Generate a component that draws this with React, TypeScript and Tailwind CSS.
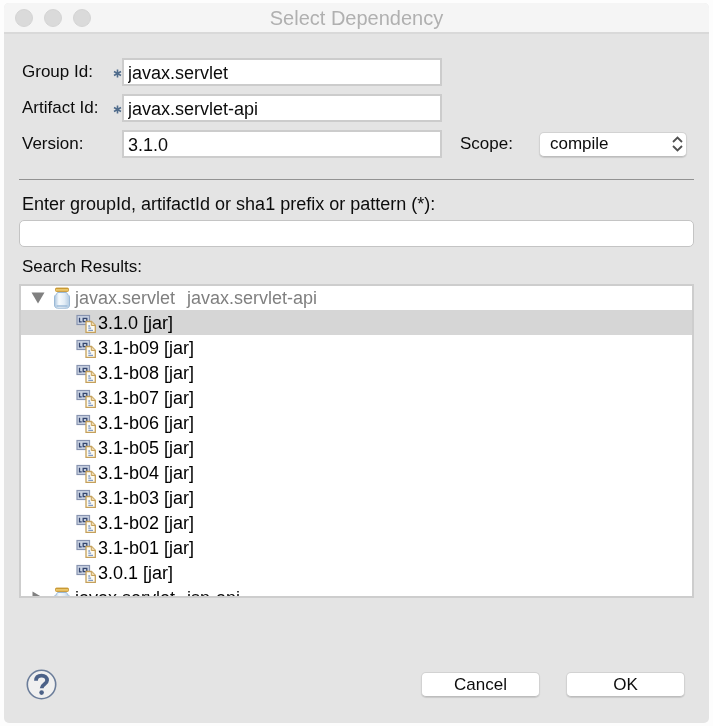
import { useState } from "react";

const versions = [
  "3.1.0",
  "3.1-b09",
  "3.1-b08",
  "3.1-b07",
  "3.1-b06",
  "3.1-b05",
  "3.1-b04",
  "3.1-b03",
  "3.1-b02",
  "3.1-b01",
  "3.0.1",
];

function BottleIcon() {
  return (
    <svg width="18" height="22" viewBox="0 0 18 22" className="shrink-0" aria-hidden="true">
      <defs>
        <linearGradient id="glass" x1="0" x2="1" y1="0" y2="0">
          <stop offset="0" stopColor="#a9c4de" />
          <stop offset="0.3" stopColor="#f6fafd" />
          <stop offset="0.65" stopColor="#e3edf6" />
          <stop offset="1" stopColor="#b3cbe2" />
        </linearGradient>
        <linearGradient id="lid" x1="0" x2="0" y1="0" y2="1">
          <stop offset="0" stopColor="#c08a1c" />
          <stop offset="0.5" stopColor="#f0cf78" />
          <stop offset="1" stopColor="#d9aa45" />
        </linearGradient>
      </defs>
      <path
        d="M4.5 5.5h9c0 1.6 3 2.2 3 4.5v8c0 2-1.2 3.2-3 3.2h-9c-1.8 0-3-1.2-3-3.2v-8c0-2.300 3-2.900 3-4.500z"
        fill="url(#glass)"
        stroke="#9bb9d6"
      />
      <path d="M3.500 19h11" stroke="#9cbbd9" strokeWidth="1.500" />
      <rect x="2.500" y="1" width="13" height="3.500" rx="1" fill="url(#lid)" stroke="#c4922c" strokeWidth="0.800" />
    </svg>
  );
}

function JarIcon() {
  return (
    <svg width="20" height="20" viewBox="0 0 20 20" className="shrink-0" aria-hidden="true">
      <rect x="1" y="2.500" width="12.500" height="9" fill="#cbd4e4" stroke="#8793b0" strokeWidth="1.200" />
      <path d="M3.500 4.800v4h2.200" fill="none" stroke="#34466f" strokeWidth="1.300" />
      <rect x="7.200" y="5.400" width="3.600" height="3.200" fill="none" stroke="#34466f" strokeWidth="1.300" />
      <path d="M10 8.500h5.500l3.800 3.800v7.200H10z" fill="#fdfbf2" stroke="#c5a05a" strokeWidth="1.300" />
      <path d="M15.300 8.500v4h4" fill="#f0dcae" stroke="#c5a05a" />
      <path d="M12.300 13h1.800M12.300 15.200h2.800M12.300 17.300h4.700" stroke="#7f9cc9" strokeWidth="1.300" />
    </svg>
  );
}

function Required() {
  return (
    <svg width="9" height="9" viewBox="0 0 9 9" className="mt-0.5" aria-hidden="true">
      <path d="M4.500 .5v8M1 2.500l7 4M8 2.500l-7 4" stroke="#4f6b8b" strokeWidth="1.600" />
    </svg>
  );
}

const field =
  "h-7 w-full min-w-0 border-2 border-[#cccccc] bg-white px-1 pt-0.5 text-[18px] outline-none";
const button =
  "h-[25px] w-[119px] rounded-[5px] border border-[#d2d2d2] border-b-[#bdbdbd] bg-white leading-[23px] shadow-[0_1px_1px_rgba(0,0,0,0.12)]";

export default function App() {
  const [selected, setSelected] = useState("3.1.0");
  return (
    <div className="bg-[#fdfdfd] px-1 py-[3px] font-['Liberation_Sans',Arial,sans-serif] text-[17px] leading-5 text-[#0c0c0c]">
      <main className="overflow-hidden rounded-[5px] bg-[#e4e4e4]">
        <header className="grid h-[31px] grid-cols-[1fr_auto_1fr] items-center border-b-2 border-[#d9d9d9] bg-[#f5f5f5]">
          <div className="flex gap-[11px] pl-[11px]">
            <span className="size-[18px] rounded-full border border-[#d3d3d3] bg-[#dadada]" />
            <span className="size-[18px] rounded-full border border-[#d3d3d3] bg-[#dadada]" />
            <span className="size-[18px] rounded-full border border-[#d3d3d3] bg-[#dadada]" />
          </div>
          <h1 className="text-[20px] text-[#b0b0b0]">Select Dependency</h1>
        </header>

        <div className="px-[15px] pt-6">
          <form className="grid grid-cols-[100px_1fr_97px_148px] items-center gap-y-2 pr-[7px] pl-[3px]">
            <label htmlFor="group" className="flex items-center justify-between">
              Group Id: <Required />
            </label>
            <input id="group" defaultValue="javax.servlet" className={field} />
            <span className="col-span-2" />
            <label htmlFor="artifact" className="flex items-center justify-between">
              Artifact Id: <Required />
            </label>
            <input id="artifact" defaultValue="javax.servlet-api" className={field} />
            <span className="col-span-2" />
            <label htmlFor="version">Version:</label>
            <input id="version" defaultValue="3.1.0" className={field} />
            <label htmlFor="scope" className="pl-[18px]">
              Scope:
            </label>
            <div className="grid">
              <select
                id="scope"
                className="col-start-1 row-start-1 h-[25px] appearance-none rounded-[5px] border border-[#d2d2d2] border-b-[#bdbdbd] bg-white px-2.5 shadow-[0_1px_1px_rgba(0,0,0,0.12)]"
              >
                <option>compile</option>
                <option>provided</option>
                <option>runtime</option>
                <option>test</option>
              </select>
              <svg
                width="11"
                height="16"
                viewBox="0 0 11 16"
                className="pointer-events-none col-start-1 row-start-1 mr-1 self-center justify-self-end"
                aria-hidden="true"
              >
                <path d="M1 6l4.500-4.500L10 6M1 10l4.500 4.500L10 10" fill="none" stroke="#505050" strokeWidth="1.800" />
              </svg>
            </div>
          </form>

          <hr className="mt-[21px] border-t border-[#929292]" />

          <label htmlFor="query" className="mt-3.5 block px-[3px] text-[18px]">
            Enter groupId, artifactId or sha1 prefix or pattern (*):
          </label>
          <input
            id="query"
            className="mt-1.5 block h-[27px] w-full rounded-[5px] border border-[#c4c4c4] bg-white px-2 outline-none"
          />
          <h2 id="results" className="mt-2.5 px-[3px]">
            Search Results:
          </h2>
          <div
            className="mt-[7px] h-[314px] overflow-y-auto border-2 border-[#cdcdcd] bg-white text-[18px] [scrollbar-width:none]"
            role="tree"
            aria-labelledby="results"
          >
            <div className="flex h-6 items-center pl-2.5 text-[#808080]" role="treeitem" aria-expanded="true">
              <svg width="14" height="12" viewBox="0 0 14 12" className="mr-2 shrink-0" aria-hidden="true">
                <path d="M.5 .5h13L7 11.500z" fill="#808080" />
              </svg>
              <BottleIcon />
              <span className="ml-1">javax.servlet</span>
              <span className="ml-3">javax.servlet-api</span>
            </div>
            {versions.map((v) => (
              <button
                key={v}
                type="button"
                role="treeitem"
                aria-selected={v === selected}
                onClick={() => setSelected(v)}
                className={`flex h-[25px] w-full items-center gap-0.5 pl-[55px] text-black ${v === selected ? "bg-[#d6d6d6]" : ""}`}
              >
                <JarIcon />
                <span>{v} [jar]</span>
              </button>
            ))}
            <div className="flex h-[25px] items-center pl-2.5" role="treeitem" aria-expanded="false">
              <svg width="14" height="14" viewBox="0 0 14 14" className="mr-2 shrink-0" aria-hidden="true">
                <path d="M1.500 .5v13L12.500 7z" fill="#808080" />
              </svg>
              <BottleIcon />
              <span className="ml-1">javax.servlet</span>
              <span className="ml-3">jsp-api</span>
            </div>
          </div>
        </div>

        <footer className="flex items-center gap-[26px] pt-[71px] pr-6 pb-[23px] pl-[22px]">
          <button type="button" aria-label="Help" className="mr-auto">
            <svg width="31" height="31" viewBox="0 0 31 31" aria-hidden="true">
              <circle cx="15.500" cy="15.500" r="14.200" fill="#f0f0f0" stroke="#6b7d9a" strokeWidth="1.600" />
              <path
                d="M10 11.800c0-3.600 2.300-5.200 5.600-5.200s5.500 1.900 5.500 4.700c0 4-5.400 4-5.400 8"
                fill="none"
                stroke="#4c6288"
                strokeWidth="3.800"
              />
              <circle cx="15.600" cy="23.600" r="2.300" fill="#4c6288" />
            </svg>
          </button>
          <button type="button" className={button}>
            Cancel
          </button>
          <button type="button" className={button}>
            OK
          </button>
        </footer>
      </main>
    </div>
  );
}
